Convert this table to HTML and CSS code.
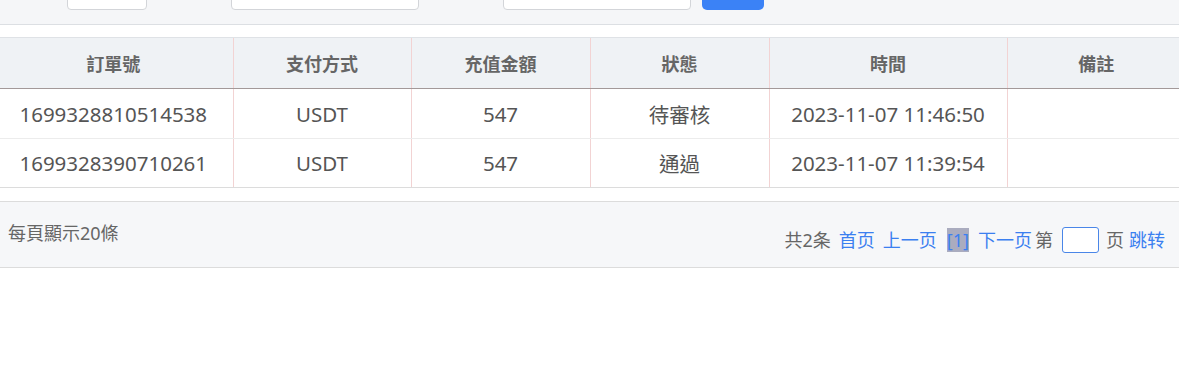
FILE: index.html
```html
<!DOCTYPE html>
<html lang="zh-Hant">
<head>
<meta charset="utf-8">
<title>充值記錄</title>
<link rel="stylesheet" href="styles.css">
</head>
<body>
<div class="toolbar">
  <input class="field field-sm" type="text">
  <input class="field field-lg field-a" type="text">
  <input class="field field-lg field-b" type="text">
  <button class="btn-search" type="button"></button>
</div>

<table class="grid">
  <colgroup>
    <col class="c0"><col class="c1"><col class="c2"><col class="c3"><col class="c4"><col class="c5">
  </colgroup>
  <thead>
    <tr>
      <th>訂單號</th>
      <th>支付方式</th>
      <th>充值金額</th>
      <th>狀態</th>
      <th>時間</th>
      <th>備註</th>
    </tr>
  </thead>
  <tbody>
    <tr>
      <td>1699328810514538</td>
      <td>USDT</td>
      <td>547</td>
      <td>待審核</td>
      <td>2023-11-07 11:46:50</td>
      <td></td>
    </tr>
    <tr>
      <td>1699328390710261</td>
      <td>USDT</td>
      <td>547</td>
      <td>通過</td>
      <td>2023-11-07 11:39:54</td>
      <td></td>
    </tr>
  </tbody>
</table>

<div class="footer">
  <div class="per-page">每頁顯示20條</div>
  <div class="pager">
    <span class="total">共2条</span>
    <a class="link" href="#">首页</a>
    <a class="link" href="#">上一页</a>
    <span class="current">[1]</span>
    <a class="link" href="#">下一页</a>
    <span class="word">第</span>
    <input class="page-input" type="text">
    <span class="word word-after">页</span>
    <a class="link jump" href="#">跳转</a>
  </div>
</div>
</body>
</html>
```

FILE: styles.css
```css
html, body {
  margin: 0;
  padding: 0;
  background: #ffffff;
  overflow: hidden;
}

body {
  font-family: "Noto Sans", "Noto Sans CJK TC", sans-serif;
  color: #555555;
}

.toolbar {
  height: 24px;
  background: #f5f6f8;
  border-bottom: 1px solid #dcdfe3;
  display: flex;
  align-items: flex-end;
  overflow: hidden;
}

.field {
  box-sizing: border-box;
  height: 34px;
  margin: 0 0 14px 0;
  border: 1px solid #d3d5d9;
  border-radius: 4px;
  background: #ffffff;
  padding: 0;
}

.field-sm {
  width: 80px;
  margin-left: 67px;
}

.field-lg {
  width: 188px;
}

.field-a {
  margin-left: 84px;
}

.field-b {
  margin-left: 84px;
}

.btn-search {
  width: 62px;
  height: 34px;
  margin: 0 0 14px 11px;
  border: none;
  border-radius: 5px;
  background: #3b82f6;
  padding: 0;
}

.grid {
  margin: 12px 0 0 -6px;
  border-collapse: collapse;
  table-layout: fixed;
  width: 1191px;
}

.c0 { width: 239px; }
.c1 { width: 178px; }
.c2 { width: 179px; }
.c3 { width: 179px; }
.c4 { width: 238px; }
.c5 { width: 178px; }

.grid th {
  height: 50px;
  padding: 0;
  background: #eff2f5;
  border-top: 1px solid #dfe2e6;
  border-bottom: 1px solid #a39999;
  border-left: 1px solid #f2d3d3;
  font-family: "Noto Sans CJK TC", sans-serif;
  font-size: 18px;
  font-weight: 700;
  color: #666666;
  text-align: center;
  vertical-align: middle;
}

.grid td {
  height: 49px;
  padding: 0;
  border-bottom: 1px solid #ececec;
  border-left: 1px solid #f2d3d3;
  font-size: 20.5px;
  color: #555555;
  text-align: center;
  vertical-align: middle;
}

.grid th:first-child,
.grid td:first-child {
  border-left: none;
}

.grid tbody tr:last-child td {
  height: 48px;
  border-bottom: 1px solid #dcdcdc;
}

.footer {
  margin-top: 13px;
  height: 65px;
  background: #f6f7f9;
  border-top: 1px solid #dcdcdc;
  border-bottom: 1px solid #dcdcdc;
  display: flex;
  justify-content: space-between;
  align-items: flex-start;
  padding: 0 14px 0 8px;
  font-size: 18px;
  color: #666666;
}

.per-page {
  margin-top: 19px;
  line-height: 24px;
}

.pager {
  margin-top: 25px;
  display: flex;
  align-items: center;
  line-height: 24px;
}

.link {
  color: #3b7ff0;
  text-decoration: none;
  margin-left: 8px;
}

.current {
  margin-left: 10px;
  margin-right: 1px;
  background: #aaacbf;
  color: #3b7ff0;
}

.word {
  margin-left: 3px;
}

.word-after {
  margin-left: 7px;
}

.jump {
  margin-left: 5px;
}

.page-input {
  box-sizing: border-box;
  width: 37px;
  height: 26px;
  margin: 0 0 0 9px;
  padding: 0;
  border: 1px solid #4a86e8;
  border-radius: 3px;
  background: #ffffff;
}
```
